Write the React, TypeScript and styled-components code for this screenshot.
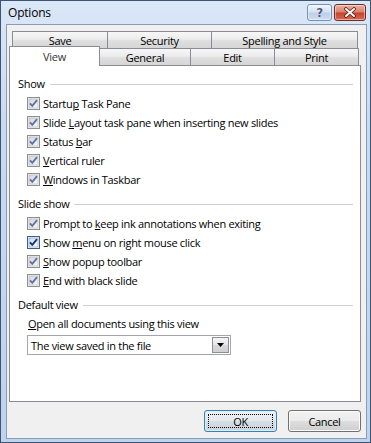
import React from "react";
import styled, { createGlobalStyle } from "styled-components";

const GlobalStyle = createGlobalStyle`
  html, body {
    margin: 0;
    padding: 0;
    background: #ffffff;
  }
  body {
    font-family: "Open Sans", "Noto Sans", sans-serif;
    font-size: 11px;
    letter-spacing: -0.3px;
    color: #000;
  }
`;

const Window = styled.div`
  width: 371px;
  height: 443px;
  box-sizing: border-box;
  border: 1px solid #3f5373;
  background: linear-gradient(180deg, #dae7f7 0%, #c8daf0 30%, #bfd3ee 100%);
  display: flex;
  flex-direction: column;
`;

const TitleBar = styled.div`
  height: 23px;
  display: flex;
  align-items: center;
  padding: 0 4px 0 7px;
`;

const Title = styled.div`
  flex: 1;
  font-size: 12px;
  letter-spacing: -0.2px;
  color: #000;
`;

const CaptionButton = styled.div<{ $close?: boolean }>`
  width: ${(p) => (p.$close ? 32 : 25)}px;
  height: 17px;
  box-sizing: border-box;
  border: 1px solid ${(p) => (p.$close ? "#6e2c23" : "#7890b1")};
  border-radius: 3px;
  margin-left: ${(p) => (p.$close ? 2 : 0)}px;
  display: flex;
  align-items: center;
  justify-content: center;
  box-shadow: inset 0 0 0 1px rgba(255, 255, 255, 0.45);
  background: ${(p) =>
    p.$close
      ? "linear-gradient(180deg, #eab2a6 0%, #dc806c 48%, #c7422b 52%, #d66a52 100%)"
      : "linear-gradient(180deg, #eef4fc 0%, #d3e1f3 48%, #bccfea 52%, #cddcf0 100%)"};
`;

const HelpGlyph = styled.span`
  font-family: "DejaVu Sans", sans-serif;
  font-weight: bold;
  font-size: 12px;
  line-height: 12px;
  color: #4a5c7a;
  text-shadow: 0 0 1px #fff, 0 0 1px #fff;
`;

const Body = styled.div`
  flex: 1;
  margin: 0 3px 3px 5px;
  border: 1px solid #8a9cb6;
  background: #f0f0f0;
  display: flex;
  flex-direction: column;
  padding: 6px 5px 0 2px;
`;

const TabRow = styled.div<{ $indent: number }>`
  display: flex;
  align-items: flex-end;
  height: 17px;
  padding-left: ${(p) => p.$indent}px;
`;

const Tab = styled.div<{ $w: number; $active?: boolean }>`
  width: ${(p) => p.$w}px;
  height: ${(p) => (p.$active ? 20 : 17)}px;
  margin-left: -1px;
  margin-bottom: ${(p) => (p.$active ? -1 : 0)}px;
  box-sizing: border-box;
  border: 1px solid #898c95;
  border-bottom: none;
  border-radius: 1px 1px 0 0;
  display: flex;
  align-items: ${(p) => (p.$active ? "flex-start" : "center")};
  justify-content: center;
  padding-top: ${(p) => (p.$active ? 2 : 0)}px;
  position: relative;
  z-index: ${(p) => (p.$active ? 2 : 0)};
  background: ${(p) =>
    p.$active
      ? "#ffffff"
      : "linear-gradient(180deg, #f7f7f7 0%, #ececec 45%, #dedede 55%, #d6d6d6 100%)"};
  color: ${(p) => (p.$active ? "#333" : "#000")};
  &:first-child {
    margin-left: 0;
  }
`;

const Panel = styled.div`
  flex: 1;
  background: #ffffff;
  border: 1px solid #898c95;
  padding: 10px 7px 0 8px;
  display: flex;
  flex-direction: column;
`;

const Section = styled.div`
  margin-bottom: 7px;
`;

const GroupHeader = styled.div`
  display: flex;
  align-items: center;
  height: 15px;
  line-height: 15px;
  gap: 5px;
  &::after {
    content: "";
    flex: 1;
    border-top: 1px solid #cfcfcf;
    margin-top: 1px;
  }
`;

const Rows = styled.div`
  display: flex;
  flex-direction: column;
  padding-left: 9px;
  margin-top: 3px;
`;

const Row = styled.label`
  display: flex;
  align-items: center;
  gap: 3px;
  height: 19px;
  white-space: nowrap;
`;

const DefaultBody = styled.div`
  padding-left: 9px;
  display: flex;
  flex-direction: column;
`;

const FieldLabel = styled.div`
  line-height: 15px;
  margin-top: 4px;
  padding-left: 1px;
`;

const Select = styled.div`
  margin-top: 4px;
  width: 204px;
  height: 20px;
  box-sizing: border-box;
  border: 1px solid #a3a6ad;
  background: #fff;
  display: flex;
  align-items: center;
  padding: 0 1px 0 3px;
`;

const SelectText = styled.span`
  flex: 1;
`;

const DropButton = styled.div`
  width: 17px;
  height: 16px;
  box-sizing: border-box;
  border: 1px solid #8c8f96;
  background: linear-gradient(180deg, #f4f4f4 0%, #e6e6e6 50%, #d8d8d8 51%, #d0d0d0 100%);
  display: flex;
  align-items: center;
  justify-content: center;
`;

const Footer = styled.div`
  display: flex;
  justify-content: flex-end;
  gap: 11px;
  padding: 8px 0 6px;
`;

const Button = styled.div<{ $default?: boolean }>`
  width: 73px;
  height: 22px;
  box-sizing: border-box;
  border: 1px solid ${(p) => (p.$default ? "#3c7fb1" : "#707070")};
  border-radius: 3px;
  box-shadow: inset 0 0 0 1px ${(p) => (p.$default ? "#d8eefa" : "#fbfbfb")};
  background: ${(p) =>
    p.$default
      ? "linear-gradient(180deg, #eef2f6 0%, #e4e9ee 48%, #d6dde4 52%, #cbd3db 100%)"
      : "linear-gradient(180deg, #f2f2f2 0%, #ebebeb 48%, #dddddd 52%, #cfcfcf 100%)"};
  display: flex;
  align-items: center;
  justify-content: center;
  padding: 3px;
`;

const FocusRect = styled.div`
  flex: 1;
  align-self: stretch;
  border: 1px dotted #000;
  display: flex;
  align-items: center;
  justify-content: center;
`;

const CheckBox = ({ hot }: { hot?: boolean }) => (
  <svg width="13" height="13" viewBox="0 0 13 13" style={{ flex: "none" }}>
    <defs>
      <linearGradient id={hot ? "cbh" : "cbn"} x1="0" y1="0" x2="1" y2="1">
        <stop offset="0" stopColor={hot ? "#c9dcef" : "#d3d4d6"} />
        <stop offset="1" stopColor="#fbfbfb" />
      </linearGradient>
    </defs>
    <rect x="0.5" y="0.5" width="12" height="12" fill="#f4f4f4" stroke={hot ? "#3c5e8a" : "#8e8f8f"} />
    <rect x="2" y="2" width="9" height="9" fill={`url(#${hot ? "cbh" : "cbn"})`} stroke={hot ? "#7ea3c7" : "#b3b4b6"} strokeWidth="0.6" />
    <path
      d="M3 6.3 L5.3 8.9 L10 3.2"
      fill="none"
      stroke={hot ? "#1d3275" : "#6072ab"}
      strokeWidth="1.9"
      strokeLinejoin="miter"
    />
  </svg>
);

type Item = { pre: string; key: string; post: string; hot?: boolean };

const showItems: Item[] = [
  { pre: "Startu", key: "p", post: " Task Pane" },
  { pre: "Slide ", key: "L", post: "ayout task pane when inserting new slides" },
  { pre: "Status ", key: "b", post: "ar" },
  { pre: "", key: "V", post: "ertical ruler" },
  { pre: "", key: "W", post: "indows in Taskbar" },
];

const slideItems: Item[] = [
  { pre: "Prompt to ", key: "k", post: "eep ink annotations when exiting" },
  { pre: "Show ", key: "m", post: "enu on right mouse click", hot: true },
  { pre: "", key: "S", post: "how popup toolbar" },
  { pre: "", key: "E", post: "nd with black slide" },
];

const CheckRows = ({ items }: { items: Item[] }) => (
  <Rows>
    {items.map((it) => (
      <Row key={it.pre + it.key + it.post}>
        <CheckBox hot={it.hot} />
        <span>
          {it.pre}
          <u>{it.key}</u>
          {it.post}
        </span>
      </Row>
    ))}
  </Rows>
);

export default function App() {
  return (
    <>
      <GlobalStyle />
      <Window>
        <TitleBar>
          <Title>Options</Title>
          <CaptionButton>
            <HelpGlyph>?</HelpGlyph>
          </CaptionButton>
          <CaptionButton $close>
            <svg width="14" height="11" viewBox="0 0 14 11">
              <path d="M3 2 L11 9 M11 2 L3 9" stroke="#5a1d14" strokeWidth="3.6" strokeLinecap="round" />
              <path d="M3 2 L11 9 M11 2 L3 9" stroke="#ffffff" strokeWidth="2" strokeLinecap="round" />
            </svg>
          </CaptionButton>
        </TitleBar>
        <Body>
          <TabRow $indent={3}>
            <Tab $w={96}>Save</Tab>
            <Tab $w={105}>Security</Tab>
            <Tab $w={147}>Spelling and Style</Tab>
          </TabRow>
          <TabRow $indent={0}>
            <Tab $w={91} $active>
              View
            </Tab>
            <Tab $w={92}>General</Tab>
            <Tab $w={85}>Edit</Tab>
            <Tab $w={85}>Print</Tab>
          </TabRow>
          <Panel>
            <Section>
              <GroupHeader>Show</GroupHeader>
              <CheckRows items={showItems} />
            </Section>
            <Section>
              <GroupHeader>Slide show</GroupHeader>
              <CheckRows items={slideItems} />
            </Section>
            <Section>
              <GroupHeader>Default view</GroupHeader>
              <DefaultBody>
                <FieldLabel>
                  <u>O</u>pen all documents using this view
                </FieldLabel>
                <Select>
                  <SelectText>The view saved in the file</SelectText>
                  <DropButton>
                    <svg width="7" height="4" viewBox="0 0 7 4">
                      <path d="M0 0 H7 L3.5 4 Z" fill="#000" />
                    </svg>
                  </DropButton>
                </Select>
              </DefaultBody>
            </Section>
          </Panel>
          <Footer>
            <Button $default>
              <FocusRect>OK</FocusRect>
            </Button>
            <Button>Cancel</Button>
          </Footer>
        </Body>
      </Window>
    </>
  );
}
